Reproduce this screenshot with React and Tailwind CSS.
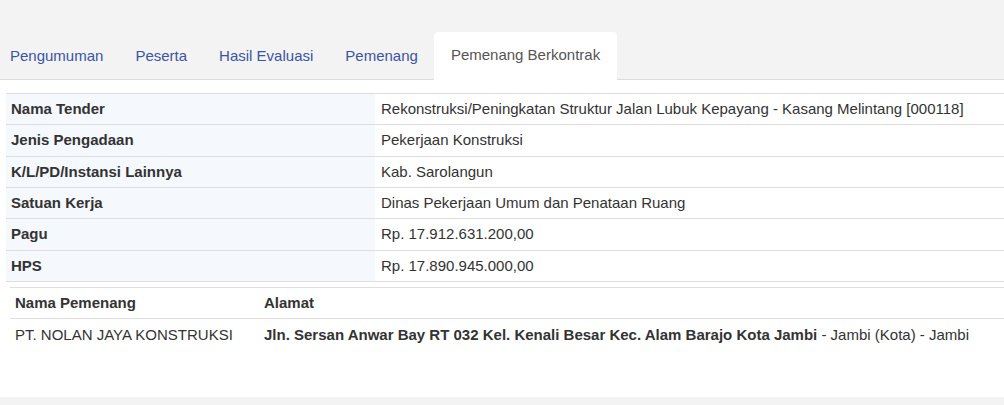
import React from "react";

const rows = [
  ["Nama Tender", "Rekonstruksi/Peningkatan Struktur Jalan Lubuk Kepayang - Kasang Melintang [000118]"],
  ["Jenis Pengadaan", "Pekerjaan Konstruksi"],
  ["K/L/PD/Instansi Lainnya", "Kab. Sarolangun"],
  ["Satuan Kerja", "Dinas Pekerjaan Umum dan Penataan Ruang"],
  ["Pagu", "Rp. 17.912.631.200,00"],
  ["HPS", "Rp. 17.890.945.000,00"],
];

const tabs = ["Pengumuman", "Peserta", "Hasil Evaluasi", "Pemenang"];

export default function App() {
  return (
    <div
      className="w-[1004px] h-[405px] bg-[#f3f3f4] flex flex-col overflow-hidden text-[15px] text-[#333]"
      style={{ fontFamily: '"Liberation Sans", Arial, sans-serif' }}
    >
      <div className="h-[80px] flex items-end border-b border-[#dcdcdc] shrink-0">
        <div className="flex items-end -mb-px">
          {tabs.map((t, i) => (
            <div
              key={t}
              className={`h-[48px] flex items-center text-[#3a55a3] ${i === 0 ? "pl-[10px] pr-4" : "px-4"}`}
            >
              {t}
            </div>
          ))}
          <div className="h-[48px] flex items-center px-[17px] bg-white rounded-t-[4px] text-[#555] border-b border-white">
            Pemenang Berkontrak
          </div>
        </div>
      </div>
      <div className="bg-white h-[317px] shrink-0 pt-[13px] pl-[6px]">
        <div className="border-t border-[#dedede]">
          {rows.map(([k, v]) => (
            <div key={k} className="flex h-[31.33px] border-b border-[#dedede]">
              <div className="w-[369px] bg-[#f5f8fc] pl-[5px] flex items-center font-bold">{k}</div>
              <div className="flex-1 pl-[6px] flex items-center">{v}</div>
            </div>
          ))}
        </div>
        <div className="ml-[4px] mt-[5px] border-t border-[#dedede]">
          <div className="flex h-[31px] border-b border-[#dedede] font-bold">
            <div className="w-[249px] pl-[5px] flex items-center">Nama Pemenang</div>
            <div className="flex-1 pl-[5px] flex items-center">Alamat</div>
          </div>
          <div className="flex h-[32px]">
            <div className="w-[249px] pl-[5px] flex items-center">PT. NOLAN JAYA KONSTRUKSI</div>
            <div className="flex-1 pl-[5px] flex items-center whitespace-nowrap">
              <b>Jln. Sersan Anwar Bay RT 032 Kel. Kenali Besar Kec. Alam Barajo Kota Jambi</b>
              <span>&nbsp;- Jambi (Kota) - Jambi</span>
            </div>
          </div>
        </div>
      </div>
    </div>
  );
}
